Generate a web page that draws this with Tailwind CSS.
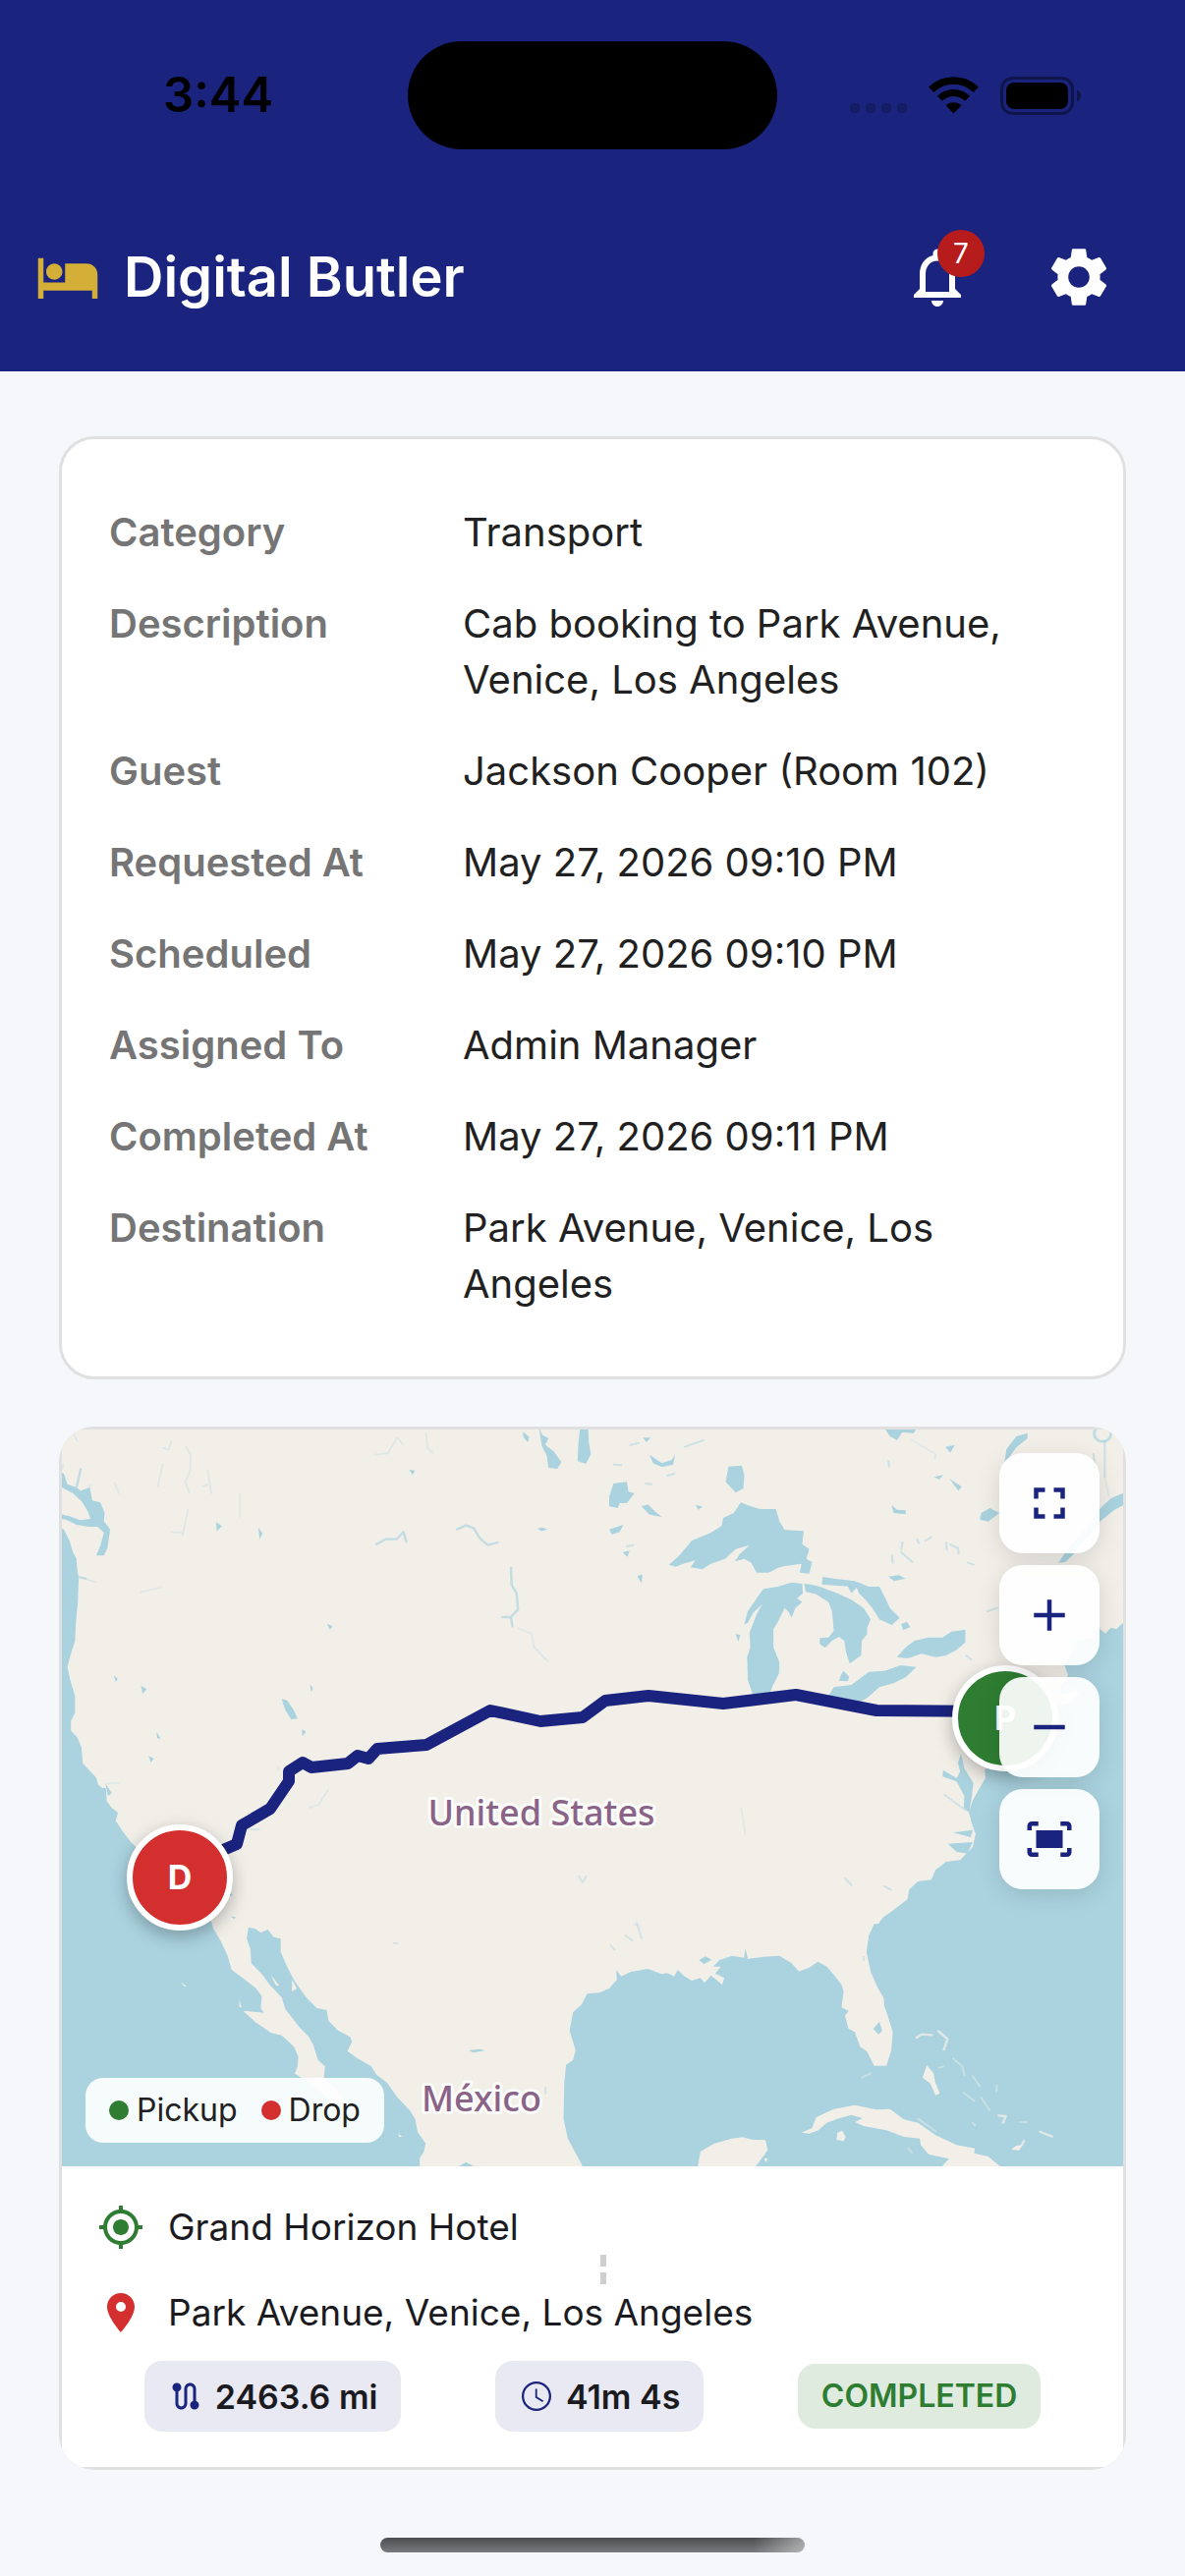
<!DOCTYPE html>
<html lang="en">
<head>
<meta charset="utf-8">
<meta name="viewport" content="width=device-width, initial-scale=1">
<title>Digital Butler</title>
<script src="https://cdn.jsdelivr.net/npm/@tailwindcss/browser@4"></script>
</head>
<body class="flex min-h-screen flex-col bg-[#f5f7fb] font-['Inter',sans-serif] text-[#212121]">

<header class="bg-[#1a237e]">
  <!-- Status bar -->
  <div class="relative flex h-[186px] items-start justify-between pt-[42px] pr-[106px] pl-[166px]">
    <time class="text-[49px] leading-[110px] font-semibold text-black">3:44</time>
    <div class="absolute left-1/2 h-[110px] w-[376px] -translate-x-1/2 rounded-full bg-black"></div>
    <div class="flex h-[110px] items-center gap-[22px]">
      <svg class="h-[38px] w-[58px]" viewBox="0 0 58 38" fill="#000" fill-opacity=".2" aria-hidden="true">
        <rect x="0" y="27" width="10" height="10" rx="4"/><rect x="16" y="27" width="10" height="10" rx="4"/><rect x="32" y="27" width="10" height="10" rx="4"/><rect x="48" y="27" width="10" height="10" rx="4"/>
      </svg>
      <svg class="h-[38px] w-[51px]" viewBox="0 0 51 38" fill="none" aria-hidden="true">
        <path d="M2.800 13.200A32.500 32.500 0 0 1 48.200 13.200" stroke="#000" stroke-width="7.500"/>
        <path d="M11.500 22.200A20 20 0 0 1 39.500 22.200" stroke="#000" stroke-width="7"/>
        <path d="M25.500 37.500L17.600 29.300A11.500 11.500 0 0 1 33.400 29.300Z" fill="#000"/>
      </svg>
      <svg class="h-[39px] w-[82px]" viewBox="0 0 82 39" aria-hidden="true">
        <rect x="1.500" y="1.500" width="72" height="36" rx="11" fill="none" stroke="#000" stroke-opacity=".4" stroke-width="3"/>
        <rect x="6" y="6" width="63" height="27" rx="8"/>
        <path d="M78 13.500c2.600 1.200 4 3.400 4 6s-1.400 4.800-4 6z" fill-opacity=".4"/>
      </svg>
    </div>
  </div>
  <!-- App bar -->
  <div class="flex h-48 items-center pr-[72px] pl-9">
    <svg class="size-[66px]" viewBox="0 0 24 24" fill="#d4af37" aria-hidden="true"><path d="M7 13c1.660 0 3-1.340 3-3S8.660 7 7 7s-3 1.340-3 3 1.340 3 3 3zm12-6h-8v7H3V5H1v15h2v-3h18v3h2v-9c0-2.210-1.790-4-4-4z"/></svg>
    <h1 class="ml-6 flex-1 text-[56px] leading-[72px] font-semibold text-white">Digital Butler</h1>
    <button type="button" aria-label="Notifications, 7 unread" class="relative mr-[72px] size-[72px]">
      <svg class="size-full" viewBox="0 0 24 24" fill="#fff" aria-hidden="true"><path d="M12 22c1.100 0 2-.9 2-2h-4c0 1.100.9 2 2 2zm6-6v-5c0-3.070-1.630-5.640-4.500-6.320V4c0-.83-.67-1.500-1.500-1.500s-1.500.67-1.500 1.500v.68C7.640 5.360 6 7.920 6 11v5l-2 2v1h16v-1l-2-2zm-2 1H8v-6c0-2.480 1.510-4.500 4-4.500s4 2.020 4 4.500v6z"/></svg>
      <span class="absolute -top-3 -right-3 size-12 rounded-full bg-[#b71c1c] text-center text-[28px] leading-[48px] text-white">7</span>
    </button>
    <button type="button" aria-label="Settings" class="size-[72px]">
      <svg class="size-full" viewBox="0 0 24 24" fill="#fff" aria-hidden="true"><path d="M19.140 12.940c.04-.3.06-.61.06-.94 0-.32-.02-.64-.07-.94l2.030-1.580c.18-.14.23-.41.12-.61l-1.920-3.320c-.12-.22-.37-.29-.59-.22l-2.390.96c-.5-.38-1.030-.7-1.620-.94l-.36-2.540c-.04-.24-.24-.41-.48-.41h-3.840c-.24 0-.43.17-.47.41l-.36 2.540c-.59.24-1.130.57-1.620.94l-2.390-.96c-.22-.08-.47 0-.59.22L2.740 8.870c-.12.21-.08.47.12.61l2.030 1.580c-.05.3-.09.63-.09.94s.02.64.07.94l-2.030 1.580c-.18.14-.23.41-.12.61l1.920 3.320c.12.22.37.29.59.22l2.390-.96c.5.38 1.030.7 1.620.94l.36 2.540c.05.24.24.41.48.41h3.840c.24 0 .44-.17.47-.41l.36-2.540c.59-.24 1.130-.56 1.620-.94l2.390.96c.22.08.47 0 .59-.22l1.920-3.320c.12-.22.07-.47-.12-.61l-2.010-1.580zM12 15.600c-1.980 0-3.600-1.620-3.600-3.600s1.620-3.600 3.600-3.600 3.600 1.620 3.600 3.600-1.620 3.600-3.600 3.600z"/></svg>
    </button>
  </div>
</header>

<main class="flex flex-col gap-12 px-[60px] pt-[66px]">
  <!-- Request details -->
  <section class="rounded-[36px] border-3 border-[#e0e0e0] bg-white px-12 py-[66px]">
    <dl class="grid grid-cols-[360px_1fr] gap-y-9 text-[40px] leading-[57px]">
      <dt class="font-semibold text-[#757575]">Category</dt><dd>Transport</dd>
      <dt class="font-semibold text-[#757575]">Description</dt><dd>Cab booking to Park Avenue, Venice, Los Angeles</dd>
      <dt class="font-semibold text-[#757575]">Guest</dt><dd>Jackson Cooper (Room 102)</dd>
      <dt class="font-semibold text-[#757575]">Requested At</dt><dd>May 27, 2026 09:10 PM</dd>
      <dt class="font-semibold text-[#757575]">Scheduled</dt><dd>May 27, 2026 09:10 PM</dd>
      <dt class="font-semibold text-[#757575]">Assigned To</dt><dd>Admin Manager</dd>
      <dt class="font-semibold text-[#757575]">Completed At</dt><dd>May 27, 2026 09:11 PM</dd>
      <dt class="font-semibold text-[#757575]">Destination</dt><dd>Park Avenue, Venice, Los Angeles</dd>
    </dl>
  </section>

  <!-- Trip -->
  <section class="overflow-hidden rounded-[36px] bg-[#e0e0e0] p-[3px]">
    <div class="relative h-[750px] overflow-hidden bg-[#f2efe9]">
      <svg class="size-full" viewBox="0 0 1080 750" preserveAspectRatio="xMidYMid slice" role="img" aria-label="Map of the route across the United States">
        <g transform="translate(-3 -15) scale(.35714 .33333)" fill="#aad3df" stroke="#aad3df" stroke-width="0" stroke-linejoin="round" stroke-linecap="round">
          <!-- North-west -->
          <path d="M-10 340L14 350 30 385 40 420 50 440 52 470 56 500 54 570 48 640 46 690 34 730 24 770 32 810 46 860 46 910 34 935 34 965 52 985 64 1015 68 1065 86 1085 106 1108 112 1130 130 1145 134 1180 142 1220-10 1220Z"/>
          <path d="M-10 170L14 180 24 212 50 222 62 232 88 222 95 262 118 268 130 300 128 325 146 350 138 408 128 430 106 430 118 400 128 360 110 342 85 342 50 336 20 320-10 316-10 300 30 310 60 322 90 318 82 295 65 265 40 240 8 222Z"/>
          <path d="M1368 40L1378 62 1395 72 1386 92 1410 112 1432 145 1420 165 1395 162 1390 125 1376 95ZM1485 40H1508L1510 85 1516 120 1502 150 1478 142 1480 90ZM635 868L650 872 668 900 680 928 662 930 645 902ZM1322 52L1340 68 1336 84 1324 70ZM998 168L1014 170 1008 184ZM568 345L580 362 572 380ZM448 328L464 340 450 356ZM234 828L250 838 238 852ZM255 1042L270 1050 262 1062ZM278 968L290 990 280 988ZM716 822L724 836 718 846ZM692 960L704 968 694 982ZM764 638L780 646 772 656ZM156 796L168 806 162 816ZM1362 348L1376 344 1392 350 1376 355ZM132 1125L150 1155 140 1165Z"/>
          <g fill="none" stroke-width="7" opacity=".65">
            <path d="M1134 350L1160 338 1182 346 1200 378 1222 398 1250 390M904 396L930 380 962 380 982 358 990 388M1288 468L1290 520 1304 545 1308 595 1288 618 1292 646M1264 618H1288M52 495L76 500M50 222L62 166"/>
          </g>
          <g fill="none" stroke-width="5" opacity=".28">
            <path d="M296 100L312 108 320 80M362 98L376 122 374 170 360 205 372 238M296 150L282 218M424 170L434 240M408 220L424 212M516 242V312M368 290L352 368M320 358L350 360M900 122L936 118 964 70 980 90M1046 58L1050 100 1064 116M1308 652L1346 668 1354 710 1392 752M232 542L290 528M158 208L172 240M76 502L104 510M714 1200L740 1190 768 1145M625 1075V1085M138 1126L172 1124M10 165L12 150M42 60L52 80M86 222L88 215"/>
          </g>
          <!-- North-east -->
          <g transform="translate(1568 0)">
            <path d="M170 458L200 430 235 385 290 360 320 340 325 315 355 300 375 268 400 278 430 288 475 288 485 325 500 352 554 355 550 395 570 410 562 440 578 450 570 485 543 482 548 455 500 462 480 468 455 482 420 482 405 452 385 440 358 448 372 425 400 398 360 410 330 440 290 455 265 472 232 466 245 445 210 455 190 464Z"/>
            <path d="M385 640L395 600 430 545 440 532 480 525 520 512 550 516 552 545 535 560 550 572 530 590 520 620 510 600 500 590 482 630 468 655 468 710 485 755 484 790 465 830 455 858 410 858 395 810 393 740 402 710 400 665 420 610 436 578 410 605 395 635Z"/>
            <path d="M555 516L575 518 600 525 650 545 690 565 725 590 745 625 735 650 735 670 720 690 718 735 685 760 675 725 670 690 655 678 635 690 615 712 600 700 600 682 625 680 640 660 635 600 625 572 590 548 560 540ZM608 495L650 502 700 508 740 525 770 525 782 550 800 590 828 620 805 642 770 625 750 590 730 565 712 545 705 528 690 545 680 524 650 522 606 518Z"/>
            <path d="M625 858L640 832 690 825 740 785 785 782 830 765 875 770 845 802 810 820 770 832 735 865 710 880 640 874ZM668 782L684 800 680 814 655 812 660 795ZM820 740L845 710 870 690 910 680 950 680 975 662 1015 656 1015 695 990 718 960 735 930 740 890 730 850 744ZM340 158L378 155 385 185 382 225 360 238 332 205ZM785 42H875L868 56 835 54 820 78 800 66ZM1192 56L1192 72 1160 100 1140 130 1126 150 1132 105 1160 66Z"/>
            <path d="M1480 232L1430 255 1400 285 1370 330 1330 380 1300 420 1280 452 1300 450 1320 430 1400 325 1440 290 1480 268Z"/>
            <path d="M0 250L12 210 50 205 55 235 72 240 50 270 30 270 25 285 0 280ZM115 122L150 148 178 138 188 120 182 152 150 160 125 148ZM92 280L110 274 130 295 150 312 115 305ZM0 350L40 336 30 358 8 366ZM80 492L95 488 92 515ZM805 275L820 290 845 292 845 304 810 300ZM958 98L985 92 972 116ZM38 420L58 415 52 434ZM795 494L825 490 845 500 812 508ZM1060 300L1085 285 1112 300 1080 326 1056 320ZM360 670L374 672 368 692ZM246 276L266 280 254 290ZM832 640L848 632 858 648 838 658ZM970 196L1005 220 995 232ZM96 70L118 70 106 84ZM926 190L952 184 940 198Z"/>
            <g fill="none" stroke-width="6" opacity=".5">
              <path d="M60 92L84 86M216 98L268 78M14 152L34 154M104 210L120 212M166 186L186 180M50 402L68 398M796 142L798 158M806 430L808 452M836 390L832 412M878 380L882 392M902 384L918 374M960 390L962 412M972 396L994 408 996 424M1022 452L1038 458M1078 600L1108 590M1018 736L1032 748M832 420L864 450M1380 120L1384 160M1412 80V190M672 1416L690 1436M784 1440L802 1450"/>
            </g>
            <path d="M376 1200L388 1280M70 1556L86 1560M862 76L930 120 928 136M1412 190L1424 250" fill="none" stroke-width="5" opacity=".25"/>
            <circle cx="1406" cy="58" r="24" fill="none" stroke-width="8" opacity=".7"/>
            <path d="M1500 620L1465 635 1445 655 1430 650 1414 668 1395 650 1380 680 1330 690 1320 730 1296 762 1308 795 1285 830 1290 855 1330 840 1340 850 1310 880 1230 900 1180 960 1100 1050 1070 1085 1072 1110 1050 1150 1035 1180 1025 1215 1034 1250 1044 1280 1036 1320 1000 1360 960 1365 930 1390 918 1420 880 1425 855 1450 850 1480 800 1520 780 1535 750 1580H1500Z"/>
            <path d="M1003 1035L1012 1080 1038 1125 1034 1160 1026 1215 1010 1200 1012 1165 990 1120 950 1105 952 1085 990 1110 1000 1090 994 1062ZM980 1276L1036 1268 1030 1290ZM965 1310L1036 1305 1020 1340 990 1335Z"/>
            <path d="M955 1160L1015 1208" fill="none" stroke-width="5" opacity=".5"/>
          </g>
          <!-- South-west -->
          <g transform="translate(0 1140)">
            <path d="M-10 0H134L136 40 150 60 168 75 162 100 180 130 205 165 240 200 330 330 432 400 440 430 460 465 480 510 492 555 530 585 560 610 578 635 575 672 584 686 525 680 560 715 605 748 635 755 670 790 682 820 680 850 672 872 700 890 750 930 790 970 822 970 800 930 755 885 758 850 738 830 725 785 712 760 685 730 645 675 635 640 600 600 580 570 548 535 545 490 535 460 540 425 560 430 575 442 595 432 612 455 632 460 632 500 650 545 672 590 705 640 735 672 763 678 768 710 795 740 830 760 835 775 822 803 850 825 890 850 905 875 935 900 965 945 1000 985 1015 1010 1022 1050 1045 1085 1040 1110 1028 1130 1028 1170H-10Z"/>
            <path d="M486 315L496 328 486 330ZM490 392L504 394 500 400ZM1140 1155L1160 1142 1182 1155ZM1168 801L1200 797 1214 802 1180 808Z"/>
            <path d="M1482 270L1492 288 1502 270M954 474H964M1386 915V932M545 126H570" fill="none" stroke-width="6" opacity=".4"/>
            <path d="M604 570L628 604 618 602ZM664 584L678 612 664 622ZM514 645L520 670 514 668ZM344 590L364 606 358 606ZM966 1055L978 1064 970 1066Z" fill="#f2efe9"/>
          </g>
          <!-- South-east and Gulf -->
          <g transform="translate(1568 1140)">
            <path d="M755 415L740 450 733 500 745 560 765 610 782 640 784 665 795 700 808 745 804 800 790 848 755 848 735 805 715 790 700 745 682 735 672 695 682 680 662 670 668 620 662 600 640 570 620 545 595 530 570 548 540 560 520 535 485 512 440 515 395 522 388 490 384 518 350 512 315 525 296 545 318 545 302 566 328 580 322 600 290 572 272 595 260 580 235 588 215 575 195 555 185 575 165 565 150 568 110 552 60 562 34 575 20 555 22 585 0 612-28 625-63 628-78 660-103 685-113 740-96 800-103 830-123 845-128 900-130 1010-118 1070-98 1110-68 1170H1500V400Z"/>
            <path d="M256 525L275 514 292 524 270 538ZM752 735L770 714 778 740 768 752Z"/>
            <path d="M46 450L66 466M78 412L92 458M4 480L16 494M725 515V525" fill="none" stroke-width="6" opacity=".4"/>
            <g fill="#f2efe9" stroke="#f2efe9">
              <path d="M250 1170L260 1110 300 1085 350 1070 380 1066 410 1074 445 1075 452 1105 435 1130 408 1170ZM548 1052L578 1038 590 1005 640 980 700 968 760 982 800 980 840 1012 880 1022 930 1060 990 1090 1042 1100 1040 1115 1080 1125 1125 1165 940 1165 968 1132 910 1118 888 1090 885 1070 840 1065 790 1045 725 1032 700 1020 722 1008 690 998 650 1010 620 1022 596 1045 570 1055ZM650 1052L664 1046 674 1066 668 1078 648 1074ZM905 846L925 872 928 895 942 932 930 938 915 902 893 884ZM1145 1104L1160 1092 1178 1090 1168 1106ZM442 1132L452 1130 446 1144Z"/>
              <path d="M876 762L890 752 920 754M938 742L964 766 954 798M1228 1050L1262 1064M1182 1078L1176 1090M1110 1000L1130 1002 1122 1022" fill="none" stroke-width="7" opacity=".75"/>
              <path d="M980 826L1006 850 1012 876M1036 880L1056 910M1060 945L1084 984M1104 908V926M1170 1020H1190M1010 930L1040 955M940 854L952 850M720 884L744 872M880 1010L930 1048M436 1075L440 1120M1036 1022L1042 1030M852 1100L862 1112" fill="none" stroke-width="6" opacity=".4"/>
            </g>
          </g>
        </g>
        <g class="font-['Noto_Sans',sans-serif] text-[36px] font-medium" fill="#8a6488" stroke="#fff" stroke-opacity=".75" stroke-width="6" stroke-linejoin="round" paint-order="stroke">
          <text x="488" y="403" text-anchor="middle">United States</text>
          <text x="427" y="694" text-anchor="middle">México</text>
        </g>
        <polyline fill="none" stroke="#1a237e" stroke-width="12" stroke-linejoin="round" points="150,434 178,422 183,403 212,386 231,358 231,348 245,339 254,344 291,340 301,332 312,335 321,325 371,321 436,286 487,297 530,293 553,276 597,271 673,279 747,270 829,286 960,287"/>
      </svg>

      <span class="absolute top-[402px] left-[66px] size-[108px] rounded-full border-6 border-white bg-[#d32f2f] text-center text-[34px] leading-[96px] font-bold text-white shadow-[0_6px_18px_rgba(0,0,0,0.28)]">D</span>
      <span class="absolute top-[240px] left-[906px] size-[108px] rounded-full border-6 border-white bg-[#2e7d32] text-center text-[34px] leading-[96px] font-bold text-white shadow-[0_6px_18px_rgba(0,0,0,0.28)]">P</span>

      <div class="absolute top-6 right-6 flex flex-col gap-3">
        <button type="button" aria-label="Full screen" class="grid size-[102px] place-items-center rounded-3xl bg-white/92 shadow-[0_6px_24px_rgba(0,0,0,0.12)]">
          <svg class="size-[54px]" viewBox="0 0 24 24" fill="#1a237e" aria-hidden="true"><path d="M7 14H5v5h5v-2H7v-3zm-2-4h2V7h3V5H5v5zm12 7h-3v2h5v-5h-2v3zM14 5v2h3v3h2V5h-5z"/></svg>
        </button>
        <button type="button" aria-label="Zoom in" class="grid size-[102px] place-items-center rounded-3xl bg-white/92 shadow-[0_6px_24px_rgba(0,0,0,0.12)]">
          <svg class="size-[54px]" viewBox="0 0 24 24" fill="#1a237e" aria-hidden="true"><path d="M19 13h-6v6h-2v-6H5v-2h6V5h2v6h6z"/></svg>
        </button>
        <button type="button" aria-label="Zoom out" class="grid size-[102px] place-items-center rounded-3xl bg-white/92 shadow-[0_6px_24px_rgba(0,0,0,0.12)]">
          <svg class="size-[54px]" viewBox="0 0 24 24" fill="#1a237e" aria-hidden="true"><path d="M19 13H5v-2h14z"/></svg>
        </button>
        <button type="button" aria-label="Fit route" class="grid size-[102px] place-items-center rounded-3xl bg-white/92 shadow-[0_6px_24px_rgba(0,0,0,0.12)]">
          <svg class="size-[54px]" viewBox="0 0 24 24" fill="#1a237e" aria-hidden="true"><path d="M17 4h3c1.100 0 2 .9 2 2v2h-2V6h-3V4zM4 8V6h3V4H4c-1.100 0-2 .9-2 2v2h2zm16 8v2h-3v2h3c1.100 0 2-.9 2-2v-2h-2zM7 18H4v-2H2v2c0 1.100.9 2 2 2h3v-2zM18 8H6v8h12V8z"/></svg>
        </button>
      </div>

      <ul class="absolute bottom-6 left-6 flex h-[66px] items-center gap-6 rounded-[18px] bg-white/90 px-6 text-[32px] leading-9">
        <li class="flex items-center gap-2"><span class="size-5 rounded-full bg-[#2e7d32]"></span>Pickup</li>
        <li class="flex items-center gap-2"><span class="size-5 rounded-full bg-[#d32f2f]"></span>Drop</li>
      </ul>
    </div>

    <div class="bg-white p-9 text-[#1b1b1f]">
      <div class="flex h-[51px] items-center gap-6 text-[37px]">
        <svg class="size-12" viewBox="0 0 24 24" fill="#2e7d32" aria-hidden="true"><path d="M12 8c-2.210 0-4 1.790-4 4s1.790 4 4 4 4-1.790 4-4-1.790-4-4-4zm8.940 3c-.46-4.170-3.770-7.480-7.940-7.940V1h-2v2.060C6.830 3.520 3.520 6.830 3.060 11H1v2h2.060c.46 4.170 3.770 7.480 7.940 7.940V23h2v-2.060c4.170-.46 7.480-3.770 7.940-7.940H23v-2h-2.060zM12 19c-3.870 0-7-3.130-7-7s3.130-7 7-7 7 3.130 7 7-3.130 7-7 7z"/></svg>
        <span>Grand Horizon Hotel</span>
      </div>
      <div class="flex h-9 flex-col items-center justify-center gap-1.5 pl-[22px]" aria-hidden="true">
        <span class="h-3 w-1.5 bg-[#cfcfcf]"></span>
        <span class="h-3 w-1.5 bg-[#cfcfcf]"></span>
      </div>
      <div class="flex h-[51px] items-center gap-6 text-[37px]">
        <svg class="size-12" viewBox="0 0 24 24" fill="#d32f2f" aria-hidden="true"><path d="M12 2C8.130 2 5 5.130 5 9c0 5.250 7 13 7 13s7-7.750 7-13c0-3.870-3.130-7-7-7zm0 9.500a2.500 2.500 0 0 1 0-5 2.500 2.500 0 0 1 0 5z"/></svg>
        <span>Park Avenue, Venice, Los Angeles</span>
      </div>
      <div class="mt-6 flex items-center justify-around">
        <span class="flex h-[72px] items-center gap-3 rounded-[18px] bg-[#e8e9f2] px-6 text-[34px] font-semibold">
          <svg class="size-9" viewBox="0 0 24 24" fill="#1a237e" aria-hidden="true"><path d="M19 15.180V7c0-2.210-1.790-4-4-4s-4 1.790-4 4v10c0 1.100-.9 2-2 2s-2-.9-2-2V8.820C8.160 8.400 9 7.300 9 6c0-1.660-1.340-3-3-3S3 4.340 3 6c0 1.300.84 2.400 2 2.820V17c0 2.210 1.790 4 4 4s4-1.790 4-4V7c0-1.100.9-2 2-2s2 .9 2 2v8.180c-1.160.41-2 1.510-2 2.820 0 1.660 1.340 3 3 3s3-1.340 3-3c0-1.300-.84-2.400-2-2.820z"/></svg>
          2463.6 mi
        </span>
        <span class="flex h-[72px] items-center gap-3 rounded-[18px] bg-[#e8e9f2] px-6 text-[34px] font-semibold">
          <svg class="size-9" viewBox="0 0 24 24" fill="#1a237e" aria-hidden="true"><path d="M12 2C6.480 2 2 6.480 2 12s4.480 10 10 10 10-4.480 10-10S17.520 2 12 2zm0 18.500c-4.700 0-8.500-3.800-8.500-8.500s3.800-8.500 8.500-8.500 8.500 3.800 8.500 8.500-3.800 8.500-8.500 8.500zM12.400 7H11.200v6l4.900 3 .65-1.050-4.350-2.600z"/></svg>
          41m 4s
        </span>
        <span class="flex h-[66px] items-center rounded-[18px] bg-[#e0ebe0] px-6 text-[32px] font-semibold text-[#2e7d32]">COMPLETED</span>
      </div>
    </div>
  </section>
</main>

<div class="mx-auto mt-auto mb-6 h-[15px] w-[432px] rounded-full bg-[linear-gradient(to_right,transparent_88%,rgba(255,255,255,0.45)),linear-gradient(#4b4d4f,#7a7a7c)]"></div>
</body>
</html>
